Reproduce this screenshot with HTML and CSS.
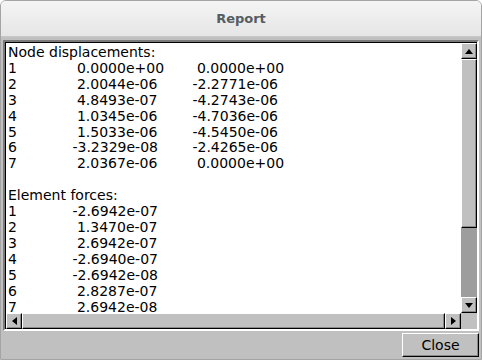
FILE: index.html
```html
<!DOCTYPE html>
<html lang="en">
<head>
  <meta charset="UTF-8">
  <title>Report</title>
  <link rel="stylesheet" href="styles.css">
</head>
<body>

<div class="window">
  <div class="titlebar">Report</div>

  <div class="client">
    <div class="display">
      <pre class="text">Node displacements:
1	  0.0000e+00	  0.0000e+00
2	  2.0044e-06	 -2.2771e-06
3	  4.8493e-07	 -4.2743e-06
4	  1.0345e-06	 -4.7036e-06
5	  1.5033e-06	 -4.5450e-06
6	 -3.2329e-08	 -2.4265e-06
7	  2.0367e-06	  0.0000e+00

Element forces:
1	 -2.6942e-07
2	  1.3470e-07
3	  2.6942e-07
4	 -2.6940e-07
5	 -2.6942e-08
6	  2.8287e-07
7	  2.6942e-08</pre>

      <div class="vscroll">
        <div class="arrow">
          <svg width="8" height="5" viewBox="0 0 8 5"><polygon points="0,5 8,5 4,0" fill="#000"/></svg>
        </div>
        <div class="thumb v-thumb"></div>
        <div class="trough"></div>
        <div class="arrow">
          <svg width="8" height="5" viewBox="0 0 8 5"><polygon points="0,0 8,0 4,5" fill="#000"/></svg>
        </div>
      </div>

      <div class="hscroll">
        <div class="arrow">
          <svg width="5" height="8" viewBox="0 0 5 8"><polygon points="5,0 5,8 0,4" fill="#000"/></svg>
        </div>
        <div class="thumb h-thumb"></div>
        <div class="arrow">
          <svg width="5" height="8" viewBox="0 0 5 8"><polygon points="0,0 0,8 5,4" fill="#000"/></svg>
        </div>
      </div>

      <div class="corner"></div>
    </div>

    <div class="buttons">
      <button class="close-btn">Close</button>
    </div>
  </div>
</div>

</body>
</html>
```

FILE: styles.css
```css
body {
  margin: 0;
  background: #ffffff;
  font-family: "DejaVu Sans", sans-serif;
}

.window {
  width: 482px;
  height: 360px;
  box-sizing: border-box;
  border: 1px solid #a4a4a4;
  border-radius: 6px 6px 0 0;
  display: flex;
  flex-direction: column;
  overflow: hidden;
}

.titlebar {
  height: 35px;
  flex: none;
  display: flex;
  align-items: center;
  justify-content: center;
  background: linear-gradient(#f4f4f4, #e6e6e6);
  border-bottom: 1px solid #c8c8c8;
  color: #555c62;
  font-weight: bold;
  font-size: 13px;
}

.client {
  flex: 1;
  background: #c0c0c0;
  display: flex;
  flex-direction: column;
  padding: 3px 2px 2px 2px;
}

/* text display: grid of text, scrollbars and corner */
.display {
  height: 287px;
  display: grid;
  grid-template-columns: 1fr 16px;
  grid-template-rows: 1fr 16px;
  border-style: solid;
  border-width: 2px;
  border-color: #7a7a7a #ffffff #ffffff #7a7a7a;
  background: #ffffff;
}

.text {
  margin: 0;
  padding: 2px 0 0 2px;
  overflow: hidden;
  font-family: "DejaVu Sans", sans-serif;
  font-size: 14px;
  line-height: 15.9px;
  tab-size: 60px;
  color: #000;
  border-top: 1px solid #000;
  border-left: 1px solid #000;
}

.vscroll {
  display: flex;
  flex-direction: column;
  background: #9d9d9d;
  border-top: 1px solid #000;
}

.hscroll {
  display: flex;
  background: #9d9d9d;
  border-left: 1px solid #000;
}

.corner { background: #c0c0c0; }

.arrow {
  flex: none;
  width: 16px;
  height: 16px;
  box-sizing: border-box;
  display: flex;
  align-items: center;
  justify-content: center;
  background: #c0c0c0;
  border-style: solid;
  border-width: 1px;
  border-color: #ffffff #000 #000 #ffffff;
  box-shadow: inset -1px -1px 0 #8a8a8a;
}

.thumb {
  box-sizing: border-box;
  background: #c0c0c0;
  border-style: solid;
  border-width: 1px;
  border-color: #ffffff #000 #000 #ffffff;
  box-shadow: inset -1px -1px 0 #8a8a8a;
}

.v-thumb { height: 169px; flex: none; }
.h-thumb { flex: 1; }
.trough { flex: 1; }

.buttons {
  display: flex;
  justify-content: flex-end;
  padding-top: 2px;
}

.close-btn {
  width: 77px;
  height: 24px;
  font-family: "DejaVu Sans", sans-serif;
  font-size: 14px;
  color: #000;
  background: #c0c0c0;
  border-style: solid;
  border-width: 1px;
  border-color: #ffffff #000 #000 #ffffff;
  box-shadow: inset -1px -1px 0 #8a8a8a;
  padding: 0;
}
```
